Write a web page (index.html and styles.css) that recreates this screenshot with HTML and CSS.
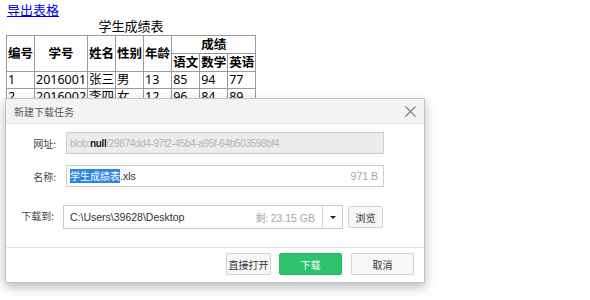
FILE: index.html
```html
<!DOCTYPE html>
<html lang="zh-CN">
<head>
  <meta charset="UTF-8">
  <title>学生成绩表</title>
  <link rel="stylesheet" href="styles.css">
</head>
<body>
<div class="page">
  <a href="#" class="export">导出表格</a>
  <table class="score">
    <caption>学生成绩表</caption>
    <thead>
      <tr>
        <th rowspan="2">编号</th>
        <th rowspan="2">学号</th>
        <th rowspan="2">姓名</th>
        <th rowspan="2">性别</th>
        <th rowspan="2">年龄</th>
        <th colspan="3">成绩</th>
      </tr>
      <tr>
        <th>语文</th>
        <th>数学</th>
        <th>英语</th>
      </tr>
    </thead>
    <tbody>
      <tr><td>1</td><td>2016001</td><td>张三</td><td>男</td><td>13</td><td>85</td><td>94</td><td>77</td></tr>
      <tr><td>2</td><td>2016002</td><td>李四</td><td>女</td><td>12</td><td>96</td><td>84</td><td>89</td></tr>
    </tbody>
  </table>
</div>

<div class="dialog">
  <div class="dlg-head">
    <span class="dlg-title">新建下载任务</span>
    <svg class="dlg-close" width="11" height="11" viewBox="0 0 11 11">
      <path d="M0.5 0.5 L10.5 10.5 M10.5 0.5 L0.5 10.5" stroke="#7a7a7a" stroke-width="1.1" fill="none"/>
    </svg>
  </div>
  <div class="dlg-body">
    <div class="row">
      <label>网址:</label>
      <div class="field field-url"><span class="latin url">blob:<b>null</b>/29874dd4-97f2-45b4-a95f-64b503598bf4</span></div>
    </div>
    <div class="row">
      <label>名称:</label>
      <div class="field">
        <span class="name"><span class="sel">学生成绩表</span><span class="latin">.xls</span></span>
        <span class="hint latin">971 B</span>
      </div>
    </div>
    <div class="row row-path">
      <label>下载到:</label>
      <div class="combo">
        <div class="combo-text">
          <span class="latin">C:\Users\39628\Desktop</span>
          <span class="hint">剩: <span class="latin">23.15 GB</span></span>
        </div>
        <div class="combo-arrow"></div>
      </div>
      <button class="btn btn-browse">浏览</button>
    </div>
  </div>
  <div class="dlg-foot">
    <button class="btn btn-open">直接打开</button>
    <button class="btn btn-ok">下载</button>
    <button class="btn btn-cancel">取消</button>
  </div>
</div>
</body>
</html>
```

FILE: styles.css
```css
body {
  margin: 0;
  background: white;
  font-family: "Noto Sans", "Noto Sans CJK SC", sans-serif;
  color: #000;
}
.page {
  padding: 2px 6px;
}
.export {
  display: block;
  width: max-content;
  font-size: 13px;
  line-height: 16px;
  color: #0000ee;
  padding-left: 1px;
}
.score {
  border-collapse: collapse;
  font-size: 12.5px;
}
.score caption {
  line-height: 17px;
  font-size: 13px;
}
.score th, .score td {
  border: 1px solid #9a9a9a;
  padding: 1px;
  white-space: nowrap;
}
.score th {
  line-height: 15px;
  font-weight: bold;
}
.score td {
  line-height: 14px;
  text-align: left;
}

/* dialog */
.dialog {
  position: absolute;
  left: 5px;
  top: 98px;
  width: 418px;
  height: 183px;
  background: white;
  border: 1px solid #c4c4c4;
  box-shadow: 0 4px 10px rgba(0, 0, 0, 0.28);
  font-family: "Noto Sans CJK SC", sans-serif;
  font-size: 10px;
  color: #444;
  display: flex;
  flex-direction: column;
}
.latin {
  font-family: "Liberation Sans", "Noto Sans CJK SC", sans-serif;
  font-size: 10.5px;
}
.url {
  font-size: 10px;
  letter-spacing: -0.35px;
}
.dlg-head {
  height: 24px;
  background: #f3f3f3;
  border-bottom: 1px solid #e2e2e2;
  display: flex;
  align-items: center;
  justify-content: space-between;
  padding: 0 8px 0 8px;
}
.dlg-title {
  color: #555;
  margin-top: 1px;
}
.dlg-close {
  margin-top: 1px;
}
.dlg-body {
  flex: 1;
  padding: 8px 40px 0 0;
  display: flex;
  flex-direction: column;
}
.row {
  display: flex;
  align-items: center;
  height: 22px;
  margin-bottom: 11px;
}
.row label {
  width: 50px;
  text-align: right;
  margin-right: 10px;
  color: #444;
}
.field {
  flex: 1;
  height: 20px;
  border: 1px solid #cdcdcd;
  display: flex;
  align-items: center;
  justify-content: space-between;
  padding: 0 5px 0 3px;
  color: #333;
}
.field-url {
  background: #ececec;
  color: #b4b4b4;
}
.field-url b {
  color: #1a1a1a;
}
.name {
  display: flex;
  align-items: center;
}
.sel {
  background: #2f86e8;
  color: white;
  line-height: 14px;
}
.hint {
  color: #a8a8a8;
}
.row-path {
  margin-top: 7px;
  height: 24px;
}
.row-path label {
  width: 48px;
  margin-right: 9px;
  align-self: flex-start;
  margin-top: 3px;
}
.combo {
  width: 278px;
  height: 22px;
  border: 1px solid #cdcdcd;
  display: flex;
}
.combo-text {
  flex: 1;
  display: flex;
  align-items: center;
  justify-content: space-between;
  padding: 0 7px 0 6px;
  border-right: 1px solid #d8d8d8;
  color: #333;
}
.combo-arrow {
  width: 19px;
  position: relative;
}
.combo-arrow::after {
  content: "";
  position: absolute;
  left: 7px;
  top: 10px;
  border-left: 3px solid transparent;
  border-right: 3px solid transparent;
  border-top: 3px solid #222;
}
.btn {
  font-family: "Noto Sans CJK SC", sans-serif;
  font-size: 10px;
  height: 22px;
  padding: 0;
  border: 1px solid #d3d3d3;
  border-radius: 2px;
  background: #f7f7f7;
  color: #333;
}
.btn-browse {
  width: 35px;
  margin-left: 5px;
}
.dlg-foot {
  height: 35px;
  border-top: 1px solid #e4e4e4;
  display: flex;
  justify-content: flex-end;
  align-items: flex-start;
  gap: 8px;
  padding: 5px 10px 0 0;
  box-sizing: border-box;
}
.btn-open {
  width: 45px;
}
.btn-ok {
  width: 63px;
  background: #2ec26c;
  border-color: #2ab864;
  color: white;
}
.btn-cancel {
  width: 63px;
  margin-left: 1px;
}
```
